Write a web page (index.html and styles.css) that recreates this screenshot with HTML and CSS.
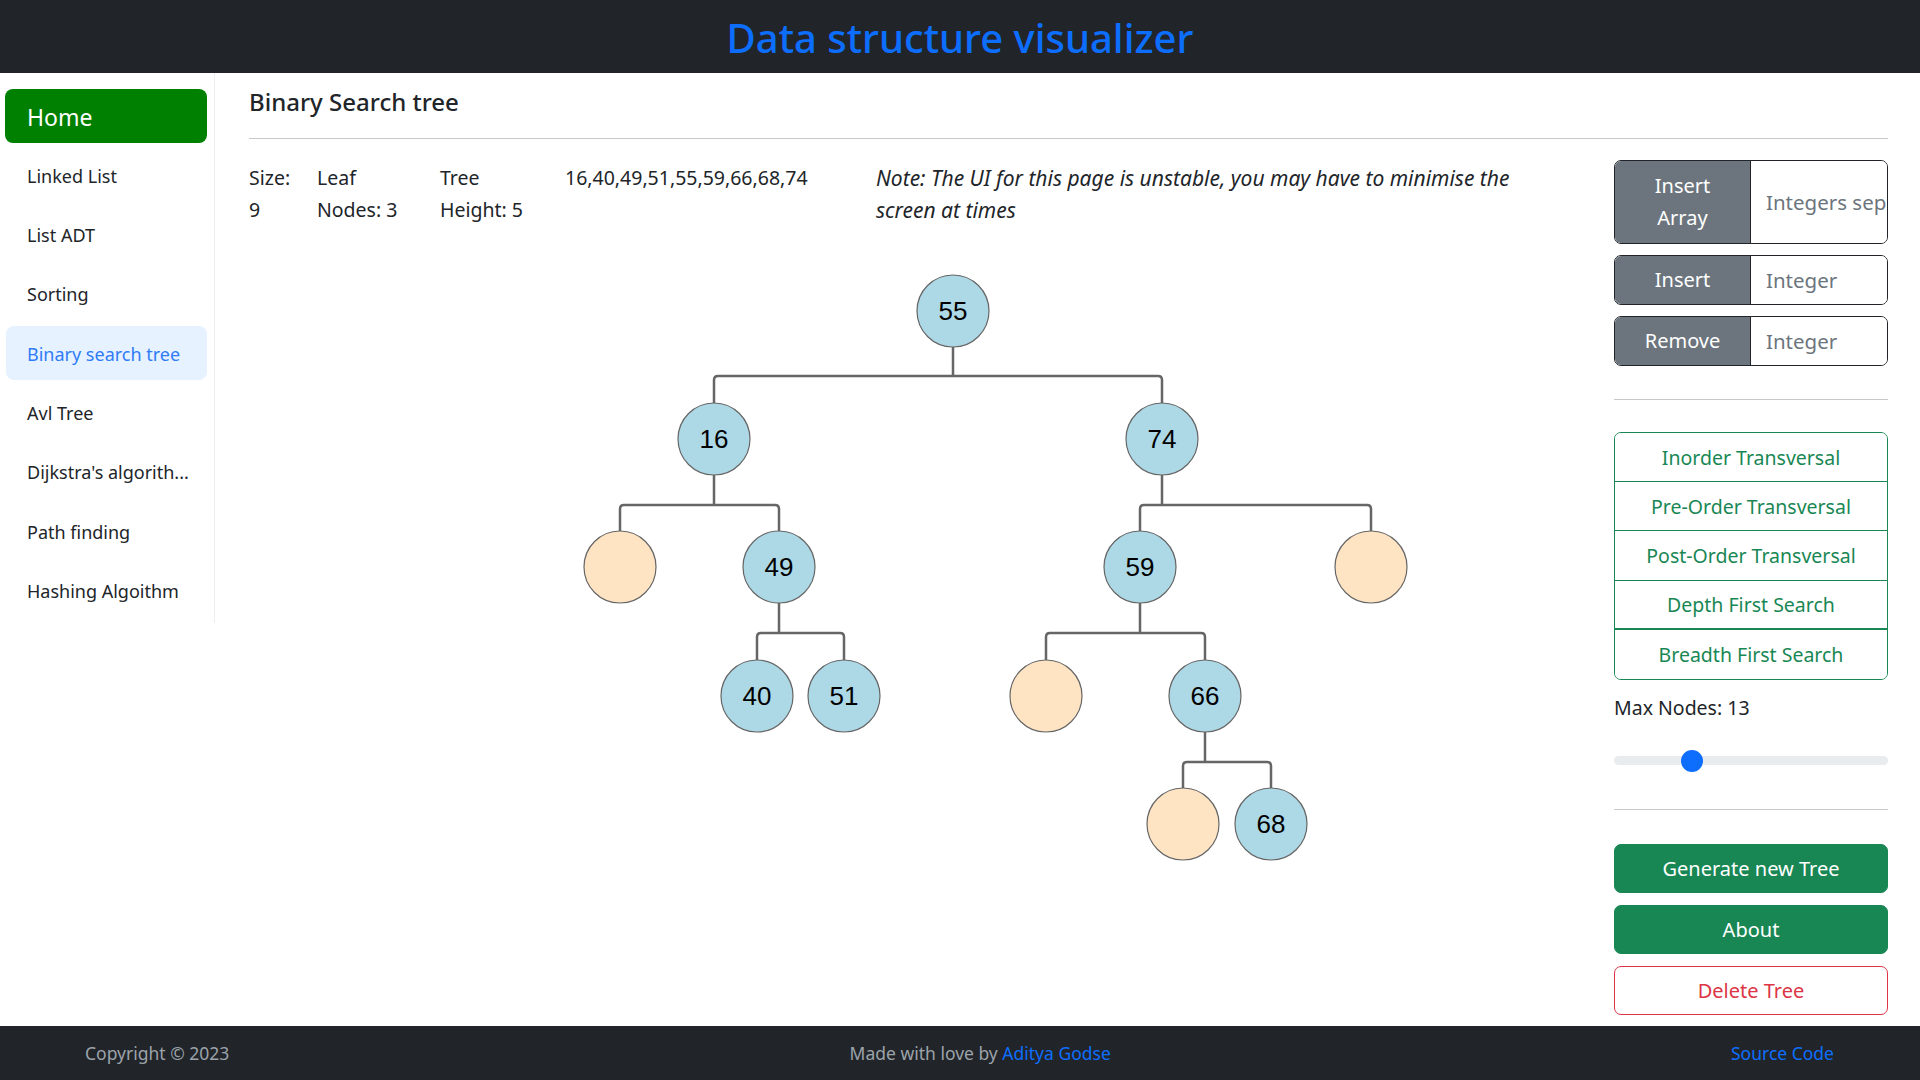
FILE: index.html
```html
<!DOCTYPE html>
<html lang="en">
<head>
<meta charset="utf-8">
<title>Data structure visualizer</title>
<link rel="stylesheet" href="styles.css">
</head>
<body>
<header class="topbar"><h1 class="brand">Data structure visualizer</h1></header>
<div class="layout">
  <nav class="sidebar">
    <a class="nav-home">Home</a>
    <a class="nav-item">Linked List</a>
    <a class="nav-item">List ADT</a>
    <a class="nav-item">Sorting</a>
    <a class="nav-item active">Binary search tree</a>
    <a class="nav-item">Avl Tree</a>
    <a class="nav-item">Dijkstra's algorith...</a>
    <a class="nav-item">Path finding</a>
    <a class="nav-item">Hashing Algoithm</a>
  </nav>
  <main class="main">
    <h2 class="page-title">Binary Search tree</h2>
    <div class="divider"></div>
    <div class="content-row">
      <section class="canvas-col">
        <div class="stats">
          <div class="stat s1">Size:<br>9</div>
          <div class="stat s2">Leaf<br>Nodes: 3</div>
          <div class="stat s3">Tree<br>Height: 5</div>
          <div class="stat s4">16,40,49,51,55,59,66,68,74</div>
          <div class="stat note">Note: The UI for this page is unstable, you may have to minimise the screen at times</div>
        </div>
        <svg class="tree" width="1330" height="620" viewBox="249 260 1330 620" xmlns="http://www.w3.org/2000/svg">
          <g fill="none" stroke="#666" stroke-width="2.5" stroke-linejoin="round">
            <path d="M953 347 V376 M714 403 V380 Q714 376 718 376 H1158 Q1162 376 1162 380 V403"/>
            <path d="M714 475 V505 M620 531 V509 Q620 505 624 505 H775 Q779 505 779 509 V531"/>
            <path d="M1162 475 V505 M1140 531 V509 Q1140 505 1144 505 H1367 Q1371 505 1371 509 V531"/>
            <path d="M779 603 V633 M757 660 V637 Q757 633 761 633 H840 Q844 633 844 637 V660"/>
            <path d="M1140 603 V633 M1046 660 V637 Q1046 633 1050 633 H1201 Q1205 633 1205 637 V660"/>
            <path d="M1205 732 V762 M1183 788 V766 Q1183 762 1187 762 H1267 Q1271 762 1271 766 V788"/>
          </g>
          <g stroke="#666" stroke-width="1.2">
            <circle cx="953" cy="311" r="36" fill="#add8e6"/>
            <circle cx="714" cy="439" r="36" fill="#add8e6"/>
            <circle cx="1162" cy="439" r="36" fill="#add8e6"/>
            <circle cx="620" cy="567" r="36" fill="#ffe4c4"/>
            <circle cx="779" cy="567" r="36" fill="#add8e6"/>
            <circle cx="1140" cy="567" r="36" fill="#add8e6"/>
            <circle cx="1371" cy="567" r="36" fill="#ffe4c4"/>
            <circle cx="757" cy="696" r="36" fill="#add8e6"/>
            <circle cx="844" cy="696" r="36" fill="#add8e6"/>
            <circle cx="1046" cy="696" r="36" fill="#ffe4c4"/>
            <circle cx="1205" cy="696" r="36" fill="#add8e6"/>
            <circle cx="1183" cy="824" r="36" fill="#ffe4c4"/>
            <circle cx="1271" cy="824" r="36" fill="#add8e6"/>
          </g>
          <g class="node-label" text-anchor="middle" dominant-baseline="central">
            <text x="953" y="311">55</text>
            <text x="714" y="439">16</text>
            <text x="1162" y="439">74</text>
            <text x="779" y="567">49</text>
            <text x="1140" y="567">59</text>
            <text x="757" y="696">40</text>
            <text x="844" y="696">51</text>
            <text x="1205" y="696">66</text>
            <text x="1271" y="824">68</text>
          </g>
        </svg>
      </section>
      <aside class="panel">
        <div class="input-group tall">
          <button class="ig-btn">Insert<br>Array</button>
          <input class="ig-input" type="text" placeholder="Integers separated by commas">
        </div>
        <div class="input-group">
          <button class="ig-btn">Insert</button>
          <input class="ig-input" type="text" placeholder="Integer">
        </div>
        <div class="input-group">
          <button class="ig-btn">Remove</button>
          <input class="ig-input" type="text" placeholder="Integer">
        </div>
        <div class="panel-rule first"></div>
        <div class="list-group">
          <button class="lg-item">Inorder Transversal</button>
          <button class="lg-item">Pre-Order Transversal</button>
          <button class="lg-item">Post-Order Transversal</button>
          <button class="lg-item thick">Depth First Search</button>
          <button class="lg-item">Breadth First Search</button>
        </div>
        <label class="max-label">Max Nodes: 13</label>
        <input class="range" type="range" min="5" max="35" value="13">
        <div class="panel-rule second"></div>
        <button class="btn-solid">Generate new Tree</button>
        <button class="btn-solid">About</button>
        <button class="btn-outline">Delete Tree</button>
      </aside>
    </div>
  </main>
</div>
<footer class="footer">
  <span class="foot-text">Copyright © 2023</span>
  <span class="foot-text">Made with love by <a class="foot-link">Aditya Godse</a></span>
  <a class="foot-link">Source Code</a>
</footer>
</body>
</html>
```
FILE: styles.css
```css
* { box-sizing: border-box; }
html, body { margin: 0; padding: 0; }
body {
  font-family: "Noto Sans", "Open Sans", sans-serif;
  color: #212529;
  background: #fff;
  height: 1080px;
  display: flex;
  flex-direction: column;
  overflow: hidden;
}
.topbar {
  background: #212529;
  height: 73px;
  flex: 0 0 73px;
  display: flex;
  align-items: center;
  justify-content: center;
}
.brand {
  margin: 0;
  color: #0d6efd;
  font-size: 40px;
  font-weight: 500;
  line-height: 1;
  padding-top: 2px;
}
.layout {
  flex: 1;
  display: flex;
  min-height: 0;
}
.sidebar {
  width: 215px;
  flex: 0 0 215px;
  align-self: flex-start;
  padding: 16px 7px 6px 5px;
  border-right: 1px solid #eceef0;
  display: flex;
  flex-direction: column;
  gap: 5.3px;
}
.nav-home {
  display: flex;
  align-items: center;
  height: 54px;
  padding-left: 22px;
  padding-top: 2px;
  background: #008000;
  color: #fff;
  border-radius: 8px;
  font-size: 23px;
}
.nav-item {
  display: flex;
  align-items: center;
  height: 54px;
  padding-left: 22px;
  padding-top: 1px;
  color: #212529;
  font-size: 18px;
  border-radius: 8px;
}
.nav-item.active {
  background: #e6f2ff;
  color: #2f7cf6;
  margin-left: 1px;
  padding-left: 21px;
}
.main {
  flex: 1;
  padding: 11px 32px 0 34px;
  display: flex;
  flex-direction: column;
  min-width: 0;
}
.page-title {
  margin: 0;
  font-size: 24px;
  font-weight: 500;
  line-height: 36px;
}
.divider {
  margin-top: 18px;
  border-top: 1px solid #c8c8c8;
}
.content-row {
  margin-top: 21px;
  display: flex;
  gap: 35px;
}
.canvas-col {
  flex: 1;
  min-width: 0;
}
.stats {
  display: flex;
  margin-top: 2px;
  font-size: 19.5px;
  line-height: 32px;
}
.s1 { flex: 0 0 68px; }
.s2 { flex: 0 0 123px; }
.s3 { flex: 0 0 125px; }
.s4 { flex: 0 0 311px; }
.note { flex: 0 0 660px; font-style: italic; font-size: 21px; }
.tree {
  display: block;
  margin-top: 34px;
}
.node-label {
  font-family: "Liberation Sans", Arial, sans-serif;
  font-size: 26px;
  fill: #000;
}
.panel {
  flex: 0 0 274px;
  width: 274px;
  display: flex;
  flex-direction: column;
}
.input-group {
  display: flex;
  height: 50px;
  border: 1px solid #212529;
  border-radius: 7px;
  overflow: hidden;
  margin-bottom: 11px;
}
.input-group.tall { height: 84px; }
.ig-btn {
  flex: 0 0 136px;
  background: #6c757d;
  color: #fff;
  border: 0;
  border-right: 1px solid #212529;
  font-family: inherit;
  font-size: 20px;
  line-height: 32px;
  padding: 0;
}
.ig-input {
  flex: 1;
  min-width: 0;
  border: 0;
  padding: 0 0 0 15px;
  font-family: inherit;
  font-size: 20.5px;
  color: #212529;
  outline: none;
}
.ig-input::placeholder { color: #6c757d; }
.panel-rule {
  border-top: 1px solid #c8c8c8;
}
.panel-rule.first { margin: 22px 0 32px; }
.panel-rule.second { margin: 37px 0 34px; }
.list-group {
  display: flex;
  flex-direction: column;
  border: 1px solid #198754;
  border-radius: 7px;
  overflow: hidden;
}
.lg-item {
  height: 49.2px;
  background: #fff;
  color: #198754;
  border: 0;
  border-bottom: 1px solid #198754;
  font-family: inherit;
  font-size: 19.5px;
  padding: 0;
}
.lg-item.thick { border-bottom-width: 2px; }
.lg-item:last-child { border-bottom: 0; }
.max-label {
  margin-top: 12px;
  font-size: 19.5px;
  line-height: 32px;
  color: #212529;
}
.range {
  -webkit-appearance: none;
  appearance: none;
  width: 274px;
  margin: 26px 0 0;
  height: 22px;
  background: transparent;
  padding: 0;
}
.range::-webkit-slider-runnable-track {
  height: 9px;
  background: #e9ecef;
  border-radius: 5px;
}
.range::-webkit-slider-thumb {
  -webkit-appearance: none;
  width: 22px;
  height: 22px;
  margin-top: -6.5px;
  border-radius: 50%;
  background: #0d6efd;
  border: 0;
}
.btn-solid, .btn-outline {
  height: 49px;
  border-radius: 7px;
  font-family: inherit;
  font-size: 20px;
  margin-bottom: 12px;
  padding: 0;
}
.btn-solid {
  background: #198754;
  color: #fff;
  border: 1px solid #198754;
}
.btn-outline {
  background: #fff;
  color: #dc3545;
  border: 1px solid #dc3545;
}
.footer {
  flex: 0 0 54px;
  height: 54px;
  background: #212529;
  display: flex;
  align-items: center;
  justify-content: space-between;
  padding: 0 86px 0 85px;
  font-size: 17.5px;
}
.foot-text { color: #9ca3ab; }
.foot-link { color: #0d6efd; text-decoration: none; }
```
